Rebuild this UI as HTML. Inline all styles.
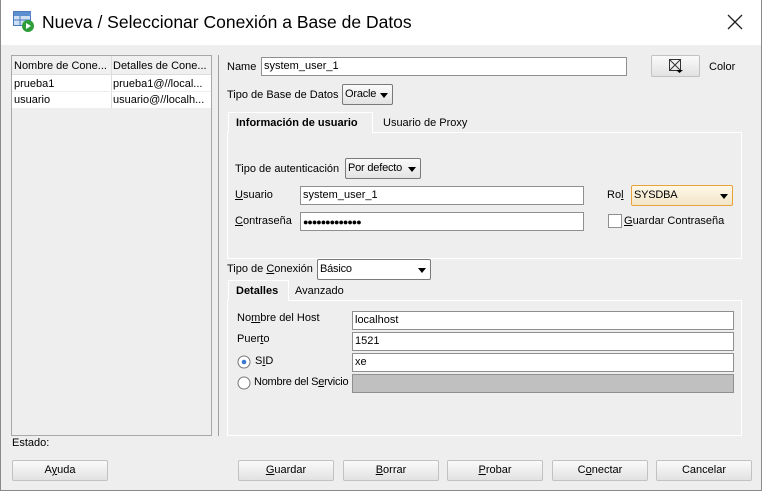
<!DOCTYPE html>
<html><head><meta charset="utf-8"><style>
*{box-sizing:border-box;margin:0;padding:0}
body{width:762px;height:491px;overflow:hidden;background:#eeeeee;font-family:"Liberation Sans",sans-serif;font-size:11px;color:#000;position:relative}
.a{position:absolute;white-space:nowrap}
.in{position:absolute;background:#fff;border:1px solid #8e8f8f;height:19px;padding:2px 2px;line-height:13px}
.sel{position:absolute;background:linear-gradient(#fbfbfb,#e3e3e3);border:1px solid #7a7a7a;border-radius:2px;padding:3px 2px;line-height:13px;letter-spacing:-0.2px}
.sel:after{content:"";position:absolute;right:4px;top:8px;border-left:4px solid transparent;border-right:4px solid transparent;border-top:5px solid #000}
.btn{position:absolute;top:460px;height:21px;width:96px;background:linear-gradient(#fafafa,#e2e2e2);border:1px solid #c2c2c2;border-radius:2px;text-align:center;line-height:19px}
u{text-decoration:underline}
</style></head><body>
<div class="a" style="left:0;top:0;width:762px;height:45px;background:#fff"></div>
<div class="a" style="left:0;top:0;width:1px;height:491px;background:#8a8a8a"></div>
<div class="a" style="right:0;top:0;width:1px;height:491px;background:#8a8a8a"></div>
<div class="a" style="left:0;bottom:0;width:762px;height:1px;background:#8a8a8a"></div>
<svg class="a" style="left:13px;top:11px" width="24" height="22"><rect x="0.5" y="0.5" width="17" height="14" fill="#cfe0f3" stroke="#4a7bbf"/><rect x="1" y="1" width="17" height="4" fill="#5b8fd0"/><line x1="1" y1="9" x2="17" y2="9" stroke="#4a7bbf"/><line x1="7" y1="5" x2="7" y2="15" stroke="#4a7bbf"/><circle cx="15" cy="15" r="6" fill="#2f9e3a"/><path d="M13 12 L18 15 L13 18Z" fill="#fff"/></svg>
<div class="a" style="left:42px;top:12px;font-size:17.5px">Nueva / Seleccionar Conexión a Base de Datos</div>
<svg class="a" style="left:727px;top:14px" width="16" height="16"><path d="M1 1L15 15M15 1L1 15" stroke="#222" stroke-width="1.3"/></svg>

<div class="a" style="left:11px;top:55px;width:201px;height:381px;border:1px solid #a8a8a8;background:#eee"></div>
<div class="a" style="left:12px;top:56px;width:199px;height:52px;background:#fff"></div>
<div class="a" style="left:12px;top:56px;width:199px;height:19px;background:#f0f0f0;border-bottom:1px solid #ddd"></div>
<div class="a" style="left:111px;top:56px;width:1px;height:52px;background:#ddd"></div>
<div class="a" style="left:12px;top:91px;width:199px;height:1px;background:#eee"></div>
<div class="a" style="left:14px;top:60px">Nombre de Cone...</div><div class="a" style="left:113px;top:60px">Detalles de Cone...</div>
<div class="a" style="left:14px;top:78px">prueba1</div><div class="a" style="left:113px;top:78px">prueba1@//local...</div>
<div class="a" style="left:14px;top:94px">usuario</div><div class="a" style="left:113px;top:94px">usuario@//localh...</div>
<div class="a" style="left:218px;top:55px;width:1px;height:381px;background:#a0a0a0"></div>

<div class="a" style="left:227px;top:61px">Name</div>
<div class="in" style="left:261px;top:57px;width:366px">system_user_1</div>
<div class="a" style="left:651px;top:55px;width:49px;height:22px;background:linear-gradient(#fafafa,#e2e2e2);border:1px solid #c2c2c2;border-radius:2px"></div>
<svg class="a" style="left:668px;top:58px" width="16" height="16"><rect x="1.5" y="1.5" width="11" height="11" fill="none" stroke="#333"/><path d="M1.5 1.5L12.5 12.5M12.5 1.5L1.5 12.5" stroke="#333"/><path d="M8 12h7l-3.5 3z" fill="#000"/></svg>
<div class="a" style="left:709px;top:61px">Color</div>
<div class="a" style="left:227px;top:89px">Tipo de Base de Datos</div>
<div class="sel" style="left:342px;top:84px;width:51px;height:21px">Oracle</div>

<div class="a" style="left:227px;top:132px;width:515px;height:127px;border:1px solid #fff"></div>
<div class="a" style="left:228px;top:112px;width:145px;height:21px;border:1px solid #fff;border-bottom:none;background:#eee;font-weight:bold;padding:4px 7px">Información de usuario</div>
<div class="a" style="left:383px;top:117px">Usuario de Proxy</div>
<div class="a" style="left:235px;top:163px">Tipo de autenticación</div>
<div class="sel" style="left:345px;top:158px;width:76px;height:21px">Por defecto</div>
<div class="a" style="left:235px;top:189px"><u>U</u>suario</div>
<div class="in" style="left:300px;top:186px;width:284px">system_user_1</div>
<div class="a" style="left:235px;top:215px"><u>C</u>ontraseña</div>
<div class="in" style="left:300px;top:212px;width:284px;font-size:9px;letter-spacing:-1px;line-height:14px">●●●●●●●●●●●●●</div>
<div class="a" style="left:607px;top:189px">Ro<u>l</u></div>
<div class="sel" style="left:631px;top:185px;width:102px;height:21px;border-color:#e8a33c;background:linear-gradient(#fff9e8,#f2e6c8)">SYSDBA</div>
<div class="a" style="left:608px;top:214px;width:14px;height:14px;border:1px solid #8e8f8f;background:#fff"></div>
<div class="a" style="left:624px;top:215px"><u>G</u>uardar Contraseña</div>

<div class="a" style="left:227px;top:263px">Tipo de <u>C</u>onexión</div>
<div class="sel" style="left:317px;top:259px;width:114px;height:21px;background:#fff">Básico</div>
<div class="a" style="left:227px;top:300px;width:515px;height:136px;border:1px solid #fff"></div>
<div class="a" style="left:228px;top:280px;width:61px;height:21px;border:1px solid #fff;border-bottom:none;background:#eee;font-weight:bold;padding:4px 7px">Detalles</div>
<div class="a" style="left:295px;top:285px">Avanzado</div>
<div class="a" style="left:237px;top:312px">No<u>m</u>bre del Host</div>
<div class="in" style="left:352px;top:311px;width:382px">localhost</div>
<div class="a" style="left:237px;top:333px">Puer<u>t</u>o</div>
<div class="in" style="left:352px;top:332px;width:382px">1521</div>
<svg class="a" style="left:237px;top:355px" width="14" height="14"><circle cx="7" cy="7" r="6" fill="#fff" stroke="#777"/><circle cx="7" cy="7" r="2.3" fill="#3b78d0"/></svg>
<div class="a" style="left:255px;top:355px">S<u>I</u>D</div>
<div class="in" style="left:352px;top:353px;width:382px">xe</div>
<svg class="a" style="left:237px;top:376px" width="14" height="14"><circle cx="7" cy="7" r="6" fill="#fff" stroke="#777"/></svg>
<div class="a" style="left:254px;top:376px;letter-spacing:-0.25px">Nombre del S<u>e</u>rvicio</div>
<div class="in" style="left:352px;top:374px;width:382px;background:#c0c0c0"></div>

<div class="a" style="left:12px;top:437px">Estado:</div>
<div class="btn" style="left:12px">A<u>y</u>uda</div>
<div class="btn" style="left:238px"><u>G</u>uardar</div>
<div class="btn" style="left:343px"><u>B</u>orrar</div>
<div class="btn" style="left:447px"><u>P</u>robar</div>
<div class="btn" style="left:552px">C<u>o</u>nectar</div>
<div class="btn" style="left:656px">Cancelar</div>
</body></html>
